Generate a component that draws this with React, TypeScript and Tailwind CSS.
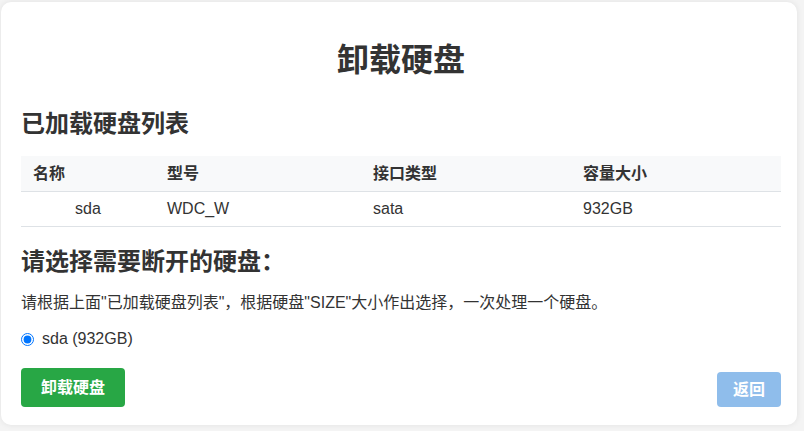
export default function App() {
  const disks = [{ name: "sda", model: "WDC_W", tran: "sata", size: "932GB" }];

  return (
    <div
      className="min-h-[431px] w-[804px] bg-[#f4f4f4] pt-[2px] pl-[1px] text-[#333]"
      style={{ fontFamily: '"Liberation Sans", "Noto Sans CJK SC", sans-serif' }}
    >
      <div className="flex h-[423px] w-[796px] flex-col rounded-[10px] bg-white pt-5 pr-4 pl-5 shadow-[0_0_6px_rgba(0,0,0,0.08)]">
        <h1 className="mt-[19px] text-center text-[32px] leading-[38px] font-bold">卸载硬盘</h1>

        <h2 className="mt-[30px] text-[24px] leading-[29px] font-bold">已加载硬盘列表</h2>

        <table className="mt-[18px] w-[760px] border-collapse text-[16px]">
          <thead>
            <tr className="border-b border-[#dee2e6] bg-[#f8f9fa]">
              <th className="w-[134px] px-3 py-2 text-left leading-[19px] font-bold">名称</th>
              <th className="w-[206px] px-3 py-2 text-left leading-[19px] font-bold">型号</th>
              <th className="w-[210px] px-3 py-2 text-left leading-[19px] font-bold">接口类型</th>
              <th className="w-[210px] px-3 py-2 text-left leading-[19px] font-bold">容量大小</th>
            </tr>
          </thead>
          <tbody>
            {disks.map((d) => (
              <tr key={d.name} className="border-b border-[#dee2e6]">
                <td className="px-3 py-2 text-center leading-[18px]">{d.name}</td>
                <td className="px-3 py-2 leading-[18px]">{d.model}</td>
                <td className="px-3 py-2 leading-[18px]">{d.tran}</td>
                <td className="px-3 py-2 leading-[18px]">{d.size}</td>
              </tr>
            ))}
          </tbody>
        </table>

        <h2 className="mt-[20px] text-[24px] leading-[29px] font-bold">请选择需要断开的硬盘：</h2>

        <p className="mt-[15px] text-[16px] leading-[24px]">
          请根据上面"已加载硬盘列表"，根据硬盘"SIZE"大小作出选择，一次处理一个硬盘。
        </p>

        <label className="mt-[12px] flex items-center gap-[8px] text-[16px] leading-[24px]">
          <input type="radio" name="disk" defaultChecked className="m-0 h-[13px] w-[13px]" />
          sda (932GB)
        </label>

        <div className="mt-[17px] flex items-end justify-between">
          <button className="h-[39px] rounded-[4px] bg-[#28a745] px-5 text-[16px] font-bold text-white">
            卸载硬盘
          </button>
          <button
            disabled
            className="h-[35px] rounded-[4px] bg-[#8fbdeb] px-4 text-[16px] font-bold text-white"
          >
            返回
          </button>
        </div>
      </div>
    </div>
  );
}
